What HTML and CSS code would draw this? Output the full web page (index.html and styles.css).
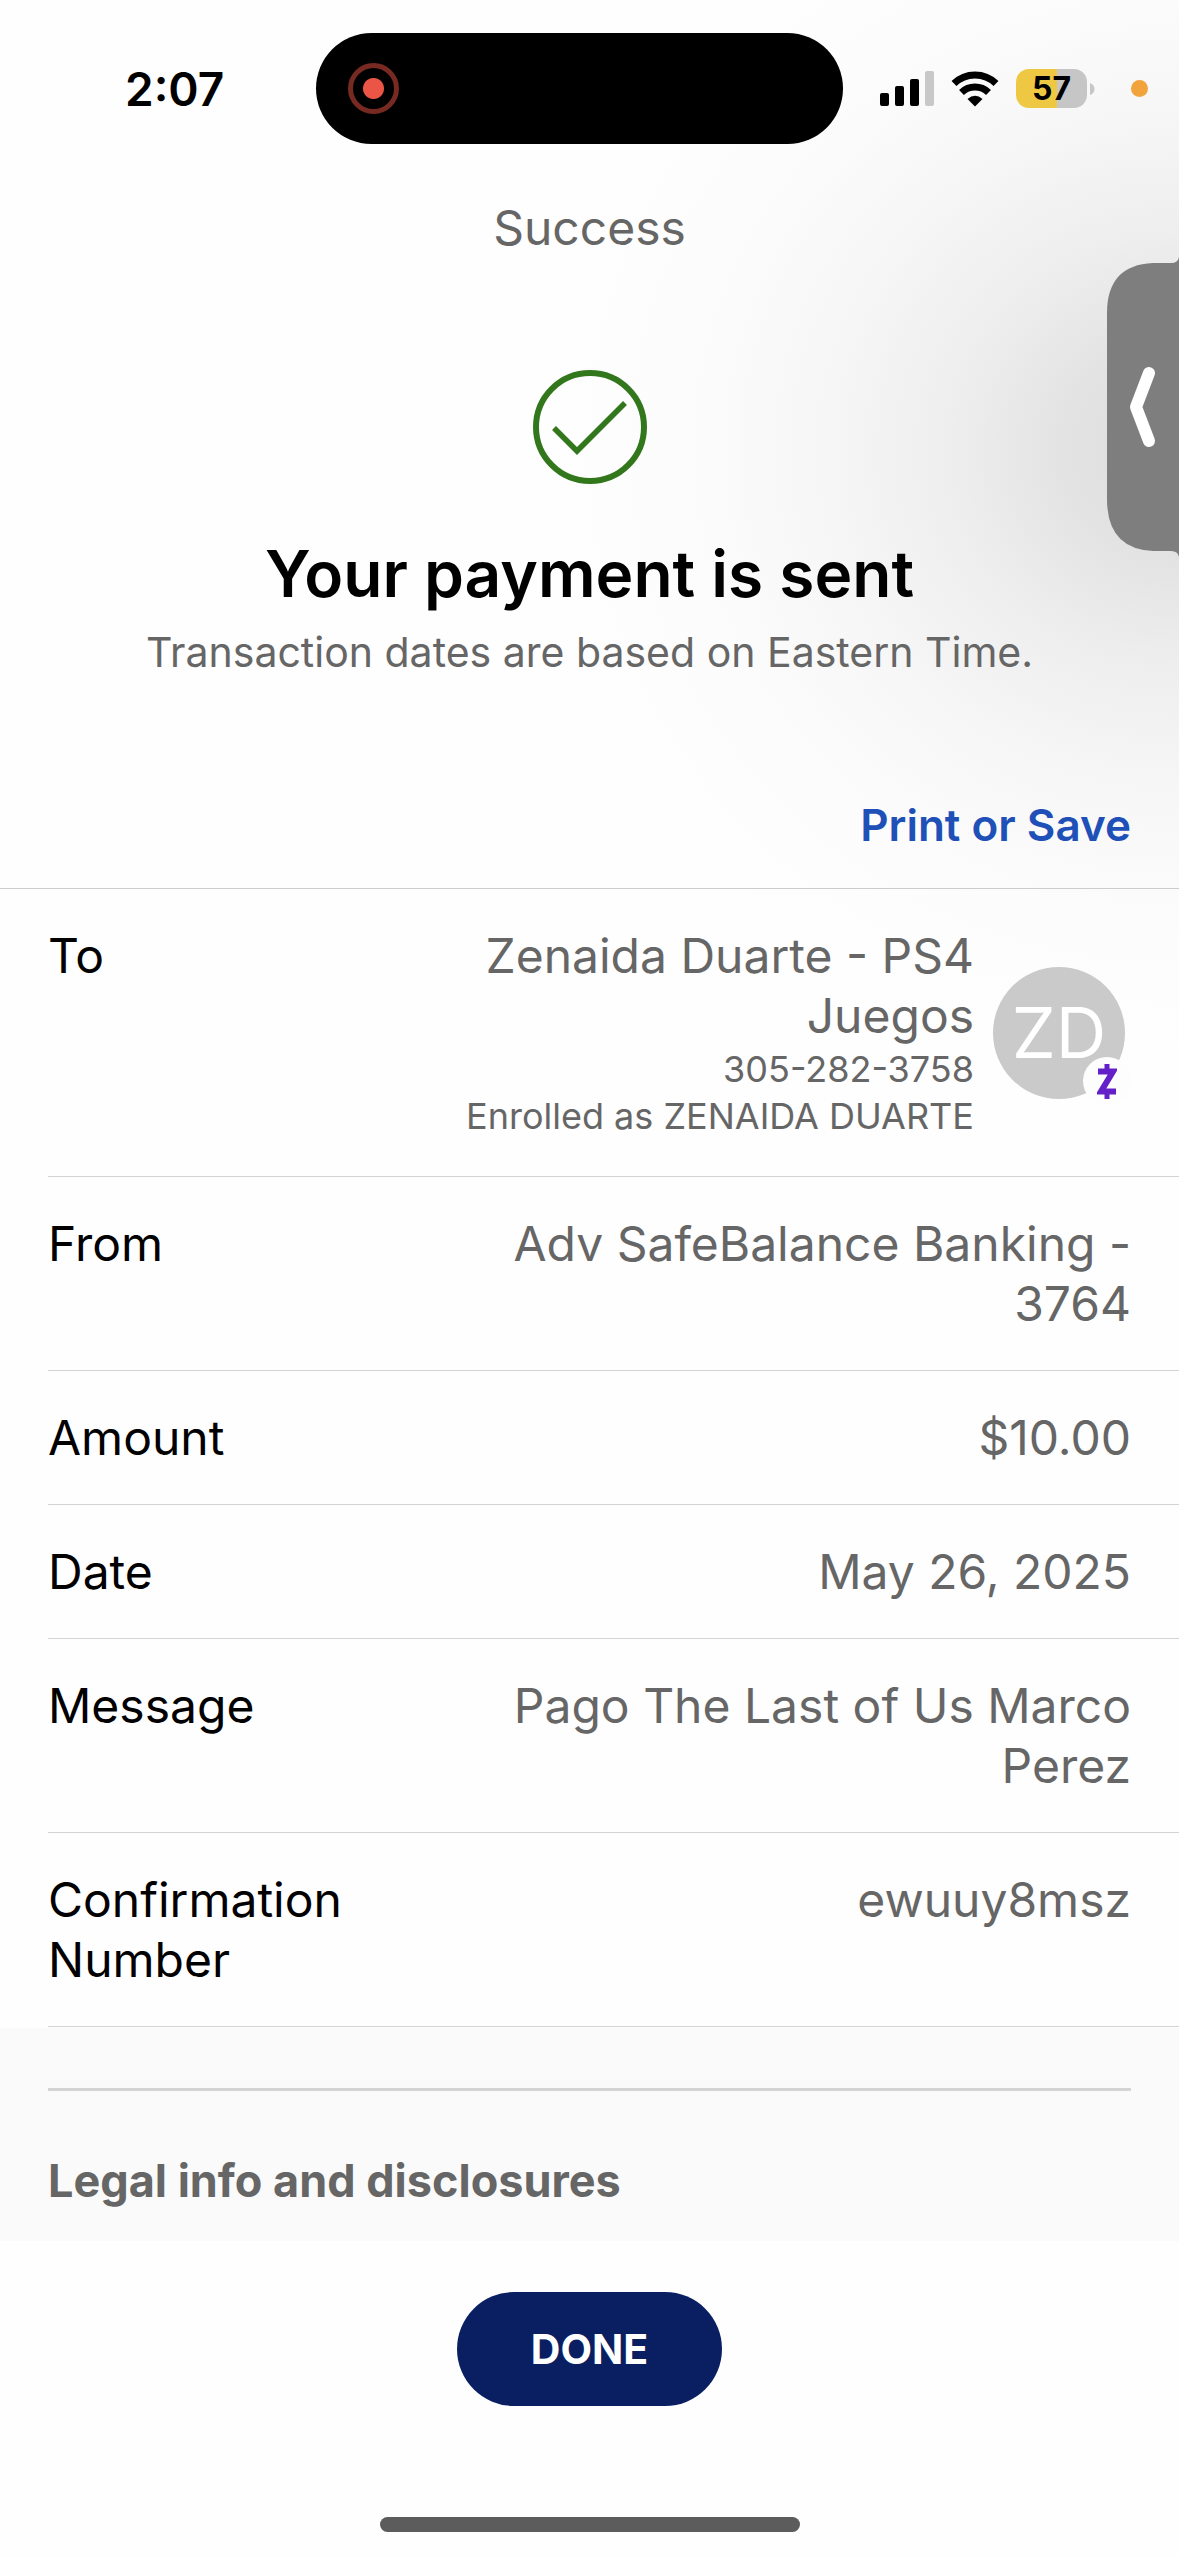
FILE: index.html
```
<!DOCTYPE html>
<html lang="en">
<head>
    <meta charset="UTF-8">
    <meta name="viewport" content="width=device-width, initial-scale=1.0">
    <title>Success</title>
    <link rel="stylesheet" href="styles.css">
</head>
<body>
    <div class="status-bar">
        <span class="time">2:07</span>
        <div class="island">
            <span class="record"></span>
        </div>
        <div class="indicators">
            <svg class="signal" width="54" height="36" viewBox="0 0 54 36">
                <rect x="0" y="22" width="9" height="13" rx="2"/>
                <rect x="15" y="15" width="9" height="20" rx="2"/>
                <rect x="30" y="8" width="9" height="27" rx="2"/>
                <rect x="45" y="0" width="9" height="35" rx="2" fill="#c8c8c8"/>
            </svg>
            <svg class="wifi" width="48" height="36" viewBox="0 0 48 36">
                <g fill="none" stroke="#000" stroke-width="7">
                    <path d="M3 12.500a30 30 0 0 1 42 0"/>
                    <path d="M10.500 21.500a19.500 19.500 0 0 1 27 0"/>
                </g>
                <path d="M24 35.500l-7.500-7.500q7.500-6.500 15 0z"/>
            </svg>
            <div class="battery">57</div>
            <svg width="5" height="12" viewBox="0 0 5 12"><path d="M0 0q4.500 2 4.500 6t-4.500 6z" fill="#c6c6c6"/></svg>
            <span class="mic-dot"></span>
        </div>
    </div>

    <main>
        <header class="title">Success</header>

        <section class="hero">
            <svg width="114" height="114" viewBox="0 0 114 114" fill="none" stroke="#33771d" stroke-width="6">
                <circle cx="57" cy="57" r="54"/>
                <path d="M21 58l23 23 48-48" stroke-width="5.500"/>
            </svg>
            <h1>Your payment is sent</h1>
            <p>Transaction dates are based on Eastern Time.</p>
        </section>

        <div class="actions">
            <a href="#">Print or Save</a>
        </div>

        <dl class="details">
            <div class="row">
                <dt>To</dt>
                <dd class="recipient">
                    <div class="recipient-text">
                        <div>Zenaida Duarte - PS4 Juegos</div>
                        <small>305-282-3758</small>
                        <small>Enrolled as ZENAIDA DUARTE</small>
                    </div>
                    <div class="avatar">
                        ZD
                        <span class="badge">
                            <svg width="20" height="35" viewBox="0 0 20 35" fill="none" stroke="#6420c8">
                                <path d="M10 0v6M10 28v7" stroke-width="5"/>
                                <path d="M1 7.500h15L4 27.500h15" stroke-width="6"/>
                            </svg>
                        </span>
                    </div>
                </dd>
            </div>
            <div class="row">
                <dt>From</dt>
                <dd>Adv SafeBalance Banking - 3764</dd>
            </div>
            <div class="row">
                <dt>Amount</dt>
                <dd>$10.00</dd>
            </div>
            <div class="row">
                <dt>Date</dt>
                <dd>May 26, 2025</dd>
            </div>
            <div class="row">
                <dt>Message</dt>
                <dd>Pago The Last of Us Marco Perez</dd>
            </div>
            <div class="row">
                <dt>Confirmation Number</dt>
                <dd>ewuuy8msz</dd>
            </div>
        </dl>

        <section class="legal">
            <h2>Legal info and disclosures</h2>
        </section>
    </main>

    <footer>
        <button type="button" class="done">DONE</button>
        <div class="home-bar"></div>
    </footer>

    <button type="button" class="side-tab" aria-label="Open panel">
        <svg width="72" height="300" viewBox="0 0 72 300">
            <path d="M72 0v300q-1-6-8-6H46Q0 292 0 242V56Q0 8 46 6h18q7 0 8-6z" fill="#7e7e7e"/>
            <path d="M42 116L29 150l13 34" fill="none" stroke="#fff" stroke-width="12" stroke-linecap="round" stroke-linejoin="round"/>
        </svg>
    </button>
</body>
</html>
```
FILE: styles.css
```
* {
    box-sizing: border-box;
}
body {
    margin: 0;
    min-height: 100vh;
    display: flex;
    flex-direction: column;
    position: relative;
    font-family: Inter, "Liberation Sans", sans-serif;
    font-size: 48px;
    line-height: 60px;
    color: #000;
    background: radial-gradient(ellipse 640px 600px at 100% 450px, #dcdcdc 0%, #e3e3e3 18%, #eeeeee 36%, #f7f7f7 58%, #fcfcfc 78%, #fefefe 100%);
}
main {
    flex: 1;
}
svg {
    display: block;
    flex: none;
}

/* status bar */
.status-bar {
    display: flex;
    align-items: center;
    padding: 33px 31px 0 0;
}
.time {
    width: 316px;
    padding-left: 125px;
    font-size: 46px;
    font-weight: 600;
}
.island {
    width: 527px;
    height: 111px;
    padding-left: 32px;
    display: flex;
    align-items: center;
    border-radius: 56px;
    background: #000;
}
.record {
    width: 51px;
    height: 51px;
    border: 5px solid #772a22;
    border-radius: 50%;
    background: radial-gradient(circle, #ea5545 10px, transparent 11px);
}
.indicators {
    flex: 1;
    display: flex;
    align-items: center;
    justify-content: flex-end;
}
.wifi {
    margin: 0 17px;
}
.battery {
    width: 71px;
    height: 39px;
    margin-right: 3px;
    border-radius: 13px;
    background: linear-gradient(to right, #efc843 58%, #c6c6c6 58%);
    font-size: 32px;
    font-weight: 700;
    line-height: 40px;
    text-align: center;
}
.mic-dot {
    width: 17px;
    height: 17px;
    margin-left: 36px;
    border-radius: 50%;
    background: #f1a33c;
}

/* title and hero */
.title {
    padding: 54px 0 112px;
    text-align: center;
    color: #666;
}
.hero {
    display: flex;
    flex-direction: column;
    align-items: center;
    text-align: center;
}
h1 {
    margin: 50px 0 8px;
    font-size: 64px;
    font-weight: 600;
    line-height: 80px;
}
.hero p {
    margin: 0;
    font-size: 41px;
    color: #666;
}
.actions {
    padding: 112px 48px 33px;
    text-align: right;
    border-bottom: 1px solid #ccc;
}
.actions a {
    display: inline-block;
    font-size: 44px;
    font-weight: 600;
    color: #1f50b8;
    text-decoration: none;
}

/* payment details */
.details {
    margin: 0 0 1px 48px;
}
.row {
    display: flex;
    justify-content: space-between;
    padding: 37px 48px 36px 0;
    border-bottom: 1px solid #d4d4d4;
}
dt {
    width: 380px;
}
dd {
    width: 680px;
    margin: 0;
    text-align: right;
    color: #666;
}
.recipient {
    display: flex;
    align-items: center;
    justify-content: flex-end;
    gap: 19px;
    padding-right: 6px;
}
.recipient-text {
    width: 520px;
}
small {
    display: block;
    font-size: 36px;
    line-height: 47px;
}
.avatar {
    position: relative;
    flex: none;
    width: 132px;
    height: 132px;
    border-radius: 50%;
    background: #cacaca;
    color: #fff;
    font-size: 70px;
    font-weight: 400;
    line-height: 132px;
    text-align: center;
}
.badge {
    position: absolute;
    right: -6px;
    bottom: -6px;
    width: 48px;
    height: 48px;
    display: flex;
    align-items: center;
    justify-content: center;
    border-radius: 50%;
    background: #fdfdfd;
}

.legal {
    padding: 60px 48px 30px;
    background: #fafafa;
}
h2 {
    margin: 0;
    padding-top: 60px;
    border-top: 3px solid #d4d4d4;
    font-size: 45px;
    font-weight: 700;
    color: #666;
}

footer {
    display: flex;
    flex-direction: column;
    align-items: center;
    padding: 48px 0 24px;
    background: #fefefe;
}
.done {
    width: 265px;
    height: 114px;
    border: none;
    border-radius: 57px;
    background: #0a1f62;
    color: #fff;
    font-family: inherit;
    font-size: 41px;
    font-weight: 700;
}
.home-bar {
    width: 420px;
    height: 15px;
    margin-top: 111px;
    border-radius: 8px;
    background: #5c5c5c;
}

/* pull-out tab over the right edge */
.side-tab {
    position: absolute;
    top: 257px;
    right: 0;
    padding: 0;
    border: none;
    background: none;
}
```
